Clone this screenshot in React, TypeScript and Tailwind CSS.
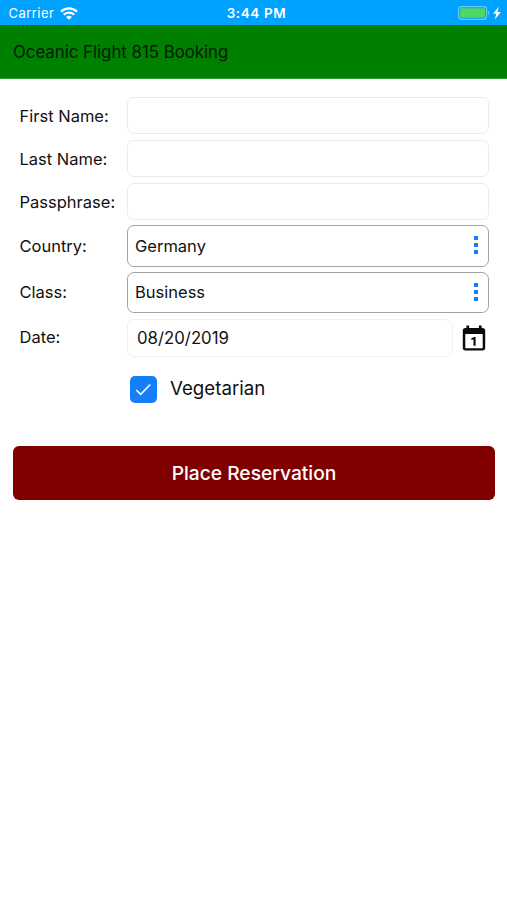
import { useState } from "react";

const textFields = [
  { id: "firstName", label: "First Name:", type: "text" },
  { id: "lastName", label: "Last Name:", type: "text" },
  { id: "passphrase", label: "Passphrase:", type: "password" },
];

const pickers = [
  { id: "country", label: "Country:", value: "Germany" },
  { id: "class", label: "Class:", value: "Business" },
];

function WifiIcon() {
  return (
    <svg viewBox="0 0 18 13" className="w-[18px] h-[13px] fill-none stroke-white">
      <path d="M1 4.6a11.6 11.6 0 0 1 16 0" strokeWidth="2.4" />
      <path d="M3.8 7.7a7.4 7.4 0 0 1 10.4 0" strokeWidth="2.3" />
      <path d="M9 12.7 6.1 9.9a4 4 0 0 1 5.8 0Z" className="fill-white stroke-none" />
    </svg>
  );
}

function BatteryIcon() {
  return (
    <svg viewBox="0 0 44 14" className="w-[44px] h-[14px]">
      <rect x="0.6" y="0.6" width="28" height="12.8" rx="3" fill="none" stroke="#6cc8fb" strokeWidth="1.2" />
      <rect x="2.2" y="2.2" width="24.8" height="9.6" rx="1.2" fill="#4cd964" />
      <path d="M30 4.8c1.6.6 1.6 3.8 0 4.4Z" fill="#6cc8fb" />
      <path d="M40.8.7 35 7.7h3.3l-1.5 5.9L42.900 6h-3.400Z" fill="#fff" />
    </svg>
  );
}

function CalendarIcon() {
  return (
    <svg viewBox="0 0 24 26" className="w-6 h-[26px]">
      <path
        fillRule="evenodd"
        fill="#0a0a0a"
        d="M4.4.5h2.7V3h9.8V.5h2.7V3h.9a2.7 2.7 0 0 1 2.7 2.7v17a2.7 2.7 0 0 1-2.7 2.7h-17a2.7 2.7 0 0 1-2.7-2.7v-17A2.7 2.7 0 0 1 3.5 3h.9ZM3.300 9v14.200h17.400V9Z"
      />
      <path d="m9.400 13.300 3-1.300h1.200v8.700h-2.100v-6.200l-2.100.6Z" fill="#0a0a0a" />
    </svg>
  );
}

function StatusBar() {
  return (
    <div className="grid grid-cols-3 items-center h-[25px] bg-[#00a2ff] text-white text-[13px] pt-[2px]">
      <div className="flex items-center gap-[6px] pl-[8.5px]">
        <span className="tracking-[0.45px] pt-px">Carrier</span>
        <WifiIcon />
      </div>
      <span className="text-center text-[13.5px] font-semibold tracking-[0.6px] pl-[6px]">3:44 PM</span>
      <div className="flex justify-end pr-[5px] pb-px">
        <BatteryIcon />
      </div>
    </div>
  );
}

export default function App() {
  const [vegetarian, setVegetarian] = useState(true);

  return (
    <div className="min-h-[900px] bg-white text-[#111] font-[Inter,'Liberation_Sans',sans-serif] text-[16.5px]">
      <StatusBar />
      <header className="flex items-center h-[54px] pl-[13px] pt-[3px] bg-[#008000] text-[#001a00] text-[16.8px] border-b border-[#2f9a2f]">
        <h1>Oceanic Flight 815 Booking</h1>
      </header>

      <form className="pt-[18px]">
        <div className="flex flex-col pl-[19px] pr-[18px]">
          {textFields.map((field) => (
            <div key={field.id} className="flex items-center mb-[6px]">
              <label htmlFor={field.id} className="w-[108px] pt-px pl-[0.5px]">
                {field.label}
              </label>
              <input
                id={field.id}
                type={field.type}
                className="flex-1 min-w-0 h-[37px] px-2 border border-[#ebebeb] rounded-[7px] outline-none"
              />
            </div>
          ))}

          {pickers.map((picker) => (
            <div key={picker.id} className="flex items-center mb-[5px] nth-4:-mt-px nth-4:h-[42px] nth-5:h-[41px]">
              <span className="w-[108px] pl-[0.5px]">{picker.label}</span>
              <button
                type="button"
                className="flex flex-1 items-center justify-between h-full pl-[7px] pr-[10px] border border-[#a3a3a3] rounded-[7px]"
              >
                {picker.value}
                <span className="flex flex-col gap-[3px] pb-[2px]">
                  <span className="size-1 bg-[#147efb]" />
                  <span className="size-1 bg-[#147efb]" />
                  <span className="size-1 bg-[#147efb]" />
                </span>
              </button>
            </div>
          ))}

          <div className="flex items-center mt-px">
            <label htmlFor="date" className="w-[108px] pb-px pl-[0.5px]">
              Date:
            </label>
            <input
              id="date"
              defaultValue="08/20/2019"
              className="flex-1 min-w-0 h-[38px] px-[9px] border border-[#f0f0f0] rounded-[7px] outline-none text-[16.8px]"
            />
            <button type="button" aria-label="Pick a date" className="ml-[9px] mr-[3px]">
              <CalendarIcon />
            </button>
          </div>

          <button
            type="button"
            role="checkbox"
            aria-checked={vegetarian}
            onClick={() => setVegetarian(!vegetarian)}
            className="flex items-center gap-3 mt-[18px] ml-[111px] text-[18.7px]"
          >
            <span className="flex items-center justify-center size-[27px] mr-px rounded-[5px] bg-[#147efb]">
              {vegetarian && (
                <svg viewBox="0 0 28 28" className="size-[27px] fill-none stroke-white">
                  <path d="m6.500 14.500 4.600 4.500L21 8.800" strokeWidth="1.7" />
                </svg>
              )}
            </span>
            Vegetarian
          </button>
        </div>

        <button
          type="button"
          className="block w-[482px] h-[54px] mt-[42.5px] ml-[13px] pt-px rounded-[6px] bg-[#800000] text-white text-[19.2px] font-medium"
        >
          Place Reservation
        </button>
      </form>
    </div>
  );
}
